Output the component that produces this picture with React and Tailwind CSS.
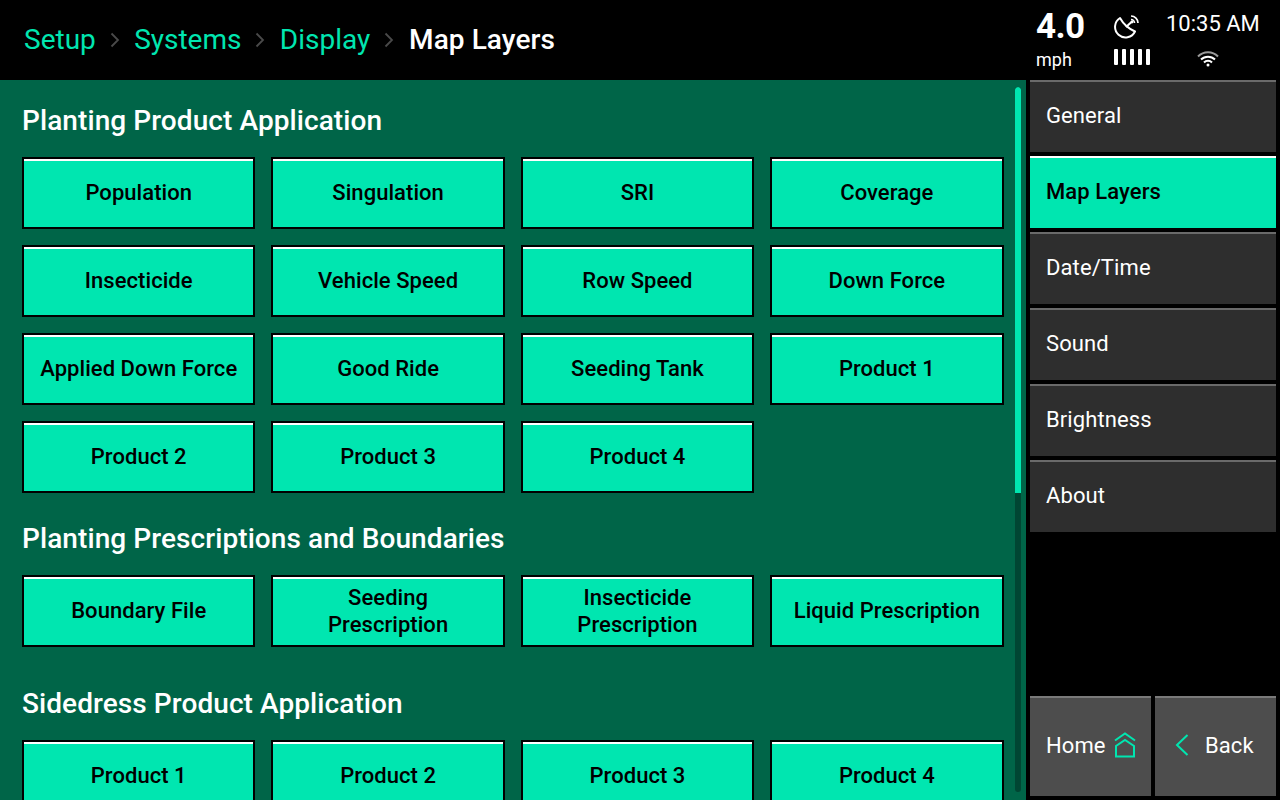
const row1 = ["Population","Singulation","SRI","Coverage","Insecticide","Vehicle Speed","Row Speed","Down Force","Applied Down Force","Good Ride","Seeding Tank","Product 1","Product 2","Product 3","Product 4"];
const row2 = [["Boundary File"],["Seeding","Prescription"],["Insecticide","Prescription"],["Liquid Prescription"]];
const row3 = ["Product 1","Product 2","Product 3","Product 4"];

function Btn({ lines }) {
  return (
    <button className={`h-[72px] border-2 border-black bg-[#00e6b0] flex flex-col items-center justify-center text-black text-[22px] leading-[27px] font-medium tracking-[0.05px] relative ${lines.length > 1 ? "pb-0" : "pb-[2px]"}`}>
      <span className="absolute left-0 right-0 top-0 h-[2px] bg-white" />
      {lines.map((l) => <span key={l}>{l}</span>)}
    </button>
  );
}

function Section({ title, items, h }) {
  return (
    <section>
      <h2 className={`text-white text-[28px] font-medium tracking-[0.08px] flex items-center ${h}`}>{title}</h2>
      <div className="grid grid-cols-[repeat(4,233.45px)] gap-x-[15.95px] gap-y-4">
        {items.map((l, i) => <Btn key={i} lines={Array.isArray(l) ? l : [l]} />)}
      </div>
    </section>
  );
}

function Sep() {
  return (
    <svg width="10" height="16" viewBox="0 0 10 16" className="ml-[14px] mr-[14.33px]" fill="none" stroke="#4a4a4a" strokeWidth="1.8">
      <path d="M1.5 1.5 8 8 1.5 14.500" />
    </svg>
  );
}

function Side({ label, active }) {
  return (
    <div className={`h-[72px] flex items-center px-4 pb-1 text-[22px] tracking-[0.1px] border-t-2 ${active ? "bg-[#00e6b0] border-white text-black font-medium" : "bg-[#2e2e2e] border-[#6a6a6a] text-white"}`}>
      {label}
    </div>
  );
}

export default function App() {
  return (
    <div className="w-[1280px] h-[800px] bg-black overflow-hidden flex flex-col font-['Roboto',sans-serif]">
      <header className="h-20 shrink-0 flex items-center pl-6 text-[28px]">
        <span className="text-[#00e6b0]">Setup</span><Sep />
        <span className="text-[#00e6b0]">Systems</span><Sep />
        <span className="text-[#00e6b0]">Display</span><Sep />
        <span className="text-white font-medium tracking-[0.08px] ml-[0.5px]">Map Layers</span>
        <div className="ml-auto flex h-full text-white">
          <div className="w-[78px] flex flex-col">
            <span className="text-[35px] font-bold leading-none mt-[9px] tracking-[-0.6px]">4.0</span>
            <span className="text-[18px] leading-none mt-[7px]">mph</span>
          </div>
          <div className="w-[52px] flex flex-col">
            <svg width="26" height="26" viewBox="0 0 26 26" className="mt-[14px]" fill="none" stroke="white" strokeWidth="2">
              <path d="M6 4A10.500 10.500 0 1 0 21 17.500Q11 13 6 4Z" strokeLinejoin="round" />
              <path d="M12 13 17.500 8" />
              <circle cx="18" cy="8" r="1.400" fill="white" stroke="none" />
              <path d="M17 5.500a3.500 3.500 0 0 1 3.500 3.500" strokeWidth="1.700" />
              <path d="M17 2a7 7 0 0 1 7 7" strokeWidth="1.700" />
            </svg>
            <div className="flex gap-1 mt-[9px]">
              {[0,1,2,3,4].map((i) => <span key={i} className="w-1 h-4 rounded-[1px] bg-white" />)}
            </div>
          </div>
          <div className="w-[114px] flex flex-col">
            <span className="text-[22px] leading-none mt-[13px]">10:35 AM</span>
            <svg width="24" height="18" viewBox="0 0 24 18" className="ml-[30px] mt-[15px]" fill="none" stroke="white" strokeWidth="2">
              <path d="M2 6.500a14 14 0 0 1 20 0" stroke="#9a9a9a" />
              <path d="M5 9.500a10 10 0 0 1 14 0" />
              <path d="M8 12.500a5.500 5.500 0 0 1 8 0" />
              <circle cx="12" cy="15" r="1.500" fill="white" stroke="none" />
            </svg>
          </div>
        </div>
      </header>
      <div className="flex flex-1 min-h-0">
        <main className="w-[1026px] bg-[#006548] flex overflow-hidden">
          <div className="w-[982px] ml-[22px] shrink-0 flex flex-col">
            <Section title="Planting Product Application" items={row1} h="h-[77px] pt-[4px]" />
            <Section title="Planting Prescriptions and Boundaries" items={row2} h="h-[82px] pt-[10px]" />
            <Section title="Sidedress Product Application" items={row3} h="h-[93px] pt-[20px]" />
          </div>
          <div className="w-[6px] ml-[11px] mt-[7px] mb-2 bg-[#004633] rounded-full shrink-0 overflow-hidden">
            <div className="h-[406px] bg-[#00e6b0] rounded-t-full" />
          </div>
        </main>
        <aside className="flex-1 px-1 flex flex-col pb-1">
          <div className="flex flex-col gap-1">
            <Side label="General" />
            <Side label="Map Layers" active />
            <Side label="Date/Time" />
            <Side label="Sound" />
            <Side label="Brightness" />
            <Side label="About" />
          </div>
          <div className="mt-auto flex gap-1 h-[100px] text-white text-[22px] tracking-[0.1px]">
            <div className="w-[121px] shrink-0 bg-[#4d4d4d] border-t-2 border-[#7a7a7a] flex items-center pl-4 pb-1">
              Home
              <svg width="22" height="26" viewBox="0 0 22 26" className="ml-[8px] shrink-0" fill="none" stroke="#00e6b0" strokeWidth="2">
                <path d="M1 8.500 11 1.500l10 7" />
                <path d="M2 24.500V14l9-6 9 6v10.500Z" />
              </svg>
            </div>
            <div className="w-[121px] shrink-0 bg-[#4d4d4d] border-t-2 border-[#7a7a7a] flex items-center pl-[20px] pb-1">
              <svg width="14" height="22" viewBox="0 0 14 22" className="mr-[16px] shrink-0" fill="none" stroke="#00e6b0" strokeWidth="2">
                <path d="M12.500 1 2 11l10.500 10" />
              </svg>
              Back
            </div>
          </div>
        </aside>
      </div>
    </div>
  );
}
